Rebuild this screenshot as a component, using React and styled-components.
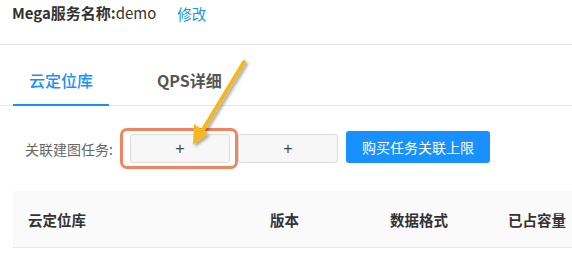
import React from 'react';
import styled, { createGlobalStyle } from 'styled-components';

const GlobalStyle = createGlobalStyle`
  html, body {
    margin: 0;
    padding: 0;
    background: #fff;
  }
  body {
    font-family: "Noto Sans CJK SC", "Noto Sans", "Liberation Sans", sans-serif;
    width: 572px;
    height: 260px;
    overflow: hidden;
  }
`

const Page = styled.div`
  position: relative;
  width: 572px;
  height: 260px;
  overflow: hidden;
`

const TopBar = styled.div`
  display: flex;
  align-items: center;
  height: 45px;
  padding: 0 12px;
  border-bottom: 1px solid #e8e8e8;
  box-sizing: border-box;
  margin-bottom: 1px;
`

const ServiceName = styled.span`
  font-size: 15px;
  color: #333;
  line-height: 24px;
  margin-top: -18px;

  b {
    font-weight: 700;
  }
`

const EditLink = styled.a`
  font-size: 14.5px;
  color: #1a93e6;
  margin-left: 21px;
  margin-top: -18px;
  cursor: pointer;
`

const Content = styled.div`
  padding: 0 0 0 13px;
`

const TabList = styled.div`
  display: flex;
  gap: 32px;
  border-bottom: 1px solid #e8e8e8;
  margin-left: -13px;
  padding-left: 13px;
`

const Tab = styled.div`
  padding: 22px 16px 12px;
  font-size: 16px;
  line-height: 24px;
  font-weight: ${p => (p.active ? 500 : 700)};
  color: ${p => (p.active ? '#1890ff' : '#555')};
  border-bottom: 2px solid ${p => (p.active ? '#1890ff' : 'transparent')};
  margin-bottom: -1px;
`

const TaskRow = styled.div`
  display: flex;
  align-items: center;
  margin-top: 28px;
  padding-left: 12px;
`

const Label = styled.span`
  font-size: 14px;
  color: #666;
  width: 105px;
`

const SlotWrap = styled.div`
  position: relative;
  margin-right: 8px;
`

const Highlight = styled.div`
  position: absolute;
  left: -10px;
  right: -8px;
  top: -6px;
  bottom: -6px;
  border: 3px solid #f2845f;
  border-radius: 7px;
  pointer-events: none;
`

const SlotButton = styled.button`
  width: 100px;
  height: 29px;
  background: #f7f7f7;
  border: 1px solid #ddd;
  border-radius: 3px;
  color: #444;
  font-family: "Liberation Sans", sans-serif;
  font-size: 16px;
  padding: 0;
  display: flex;
  align-items: center;
  justify-content: center;
`

const BuyButton = styled.button`
  height: 32px;
  padding: 0 16px;
  background: #1890ff;
  color: #fff;
  border: none;
  border-radius: 3px;
  font-family: "Noto Sans CJK SC", sans-serif;
  font-size: 14px;
  margin-top: -3px;
`

const TableHead = styled.div`
  display: grid;
  grid-template-columns: 242px 120px 118px 1fr;
  height: 56px;
  align-items: center;
  background: #fafafa;
  border-bottom: 1px solid #e8e8e8;
  margin-top: 28px;
`

const HeadCell = styled.div`
  padding-left: 15px;
  font-size: 14.5px;
  font-weight: 700;
  color: #333;
  white-space: nowrap;
`

const ArrowOverlay = styled.svg`
  position: absolute;
  left: 0;
  top: 0;
  pointer-events: none;
`

const Arrow = () => (
  <ArrowOverlay width="572" height="260" viewBox="0 0 572 260">
    <defs>
      <filter id="sh" x="-50%" y="-50%" width="200%" height="200%">
        <feDropShadow dx="2" dy="2" stdDeviation="1.5" floodColor="#000" floodOpacity="0.35" />
      </filter>
    </defs>
    <g filter="url(#sh)">
      <line x1="244" y1="62" x2="201" y2="133" stroke="#f4b81c" strokeWidth="4" strokeLinecap="round" />
      <polygon points="193,145 194,124 208,134" fill="#f4b81c" />
    </g>
  </ArrowOverlay>
);

export default function App() {
  return (
    <Page>
      <GlobalStyle />
      <TopBar>
        <ServiceName><b>Mega服务名称:</b>demo</ServiceName>
        <EditLink>修改</EditLink>
      </TopBar>
      <Content>
        <TabList>
          <Tab active>云定位库</Tab>
          <Tab>QPS详细</Tab>
        </TabList>
        <TaskRow>
          <Label>关联建图任务:</Label>
          <SlotWrap>
            <SlotButton>+</SlotButton>
            <Highlight />
          </SlotWrap>
          <SlotWrap>
            <SlotButton>+</SlotButton>
          </SlotWrap>
          <BuyButton>购买任务关联上限</BuyButton>
        </TaskRow>
        <TableHead>
          <HeadCell>云定位库</HeadCell>
          <HeadCell>版本</HeadCell>
          <HeadCell>数据格式</HeadCell>
          <HeadCell>已占容量</HeadCell>
        </TableHead>
      </Content>
      <Arrow />
    </Page>
  );
}
